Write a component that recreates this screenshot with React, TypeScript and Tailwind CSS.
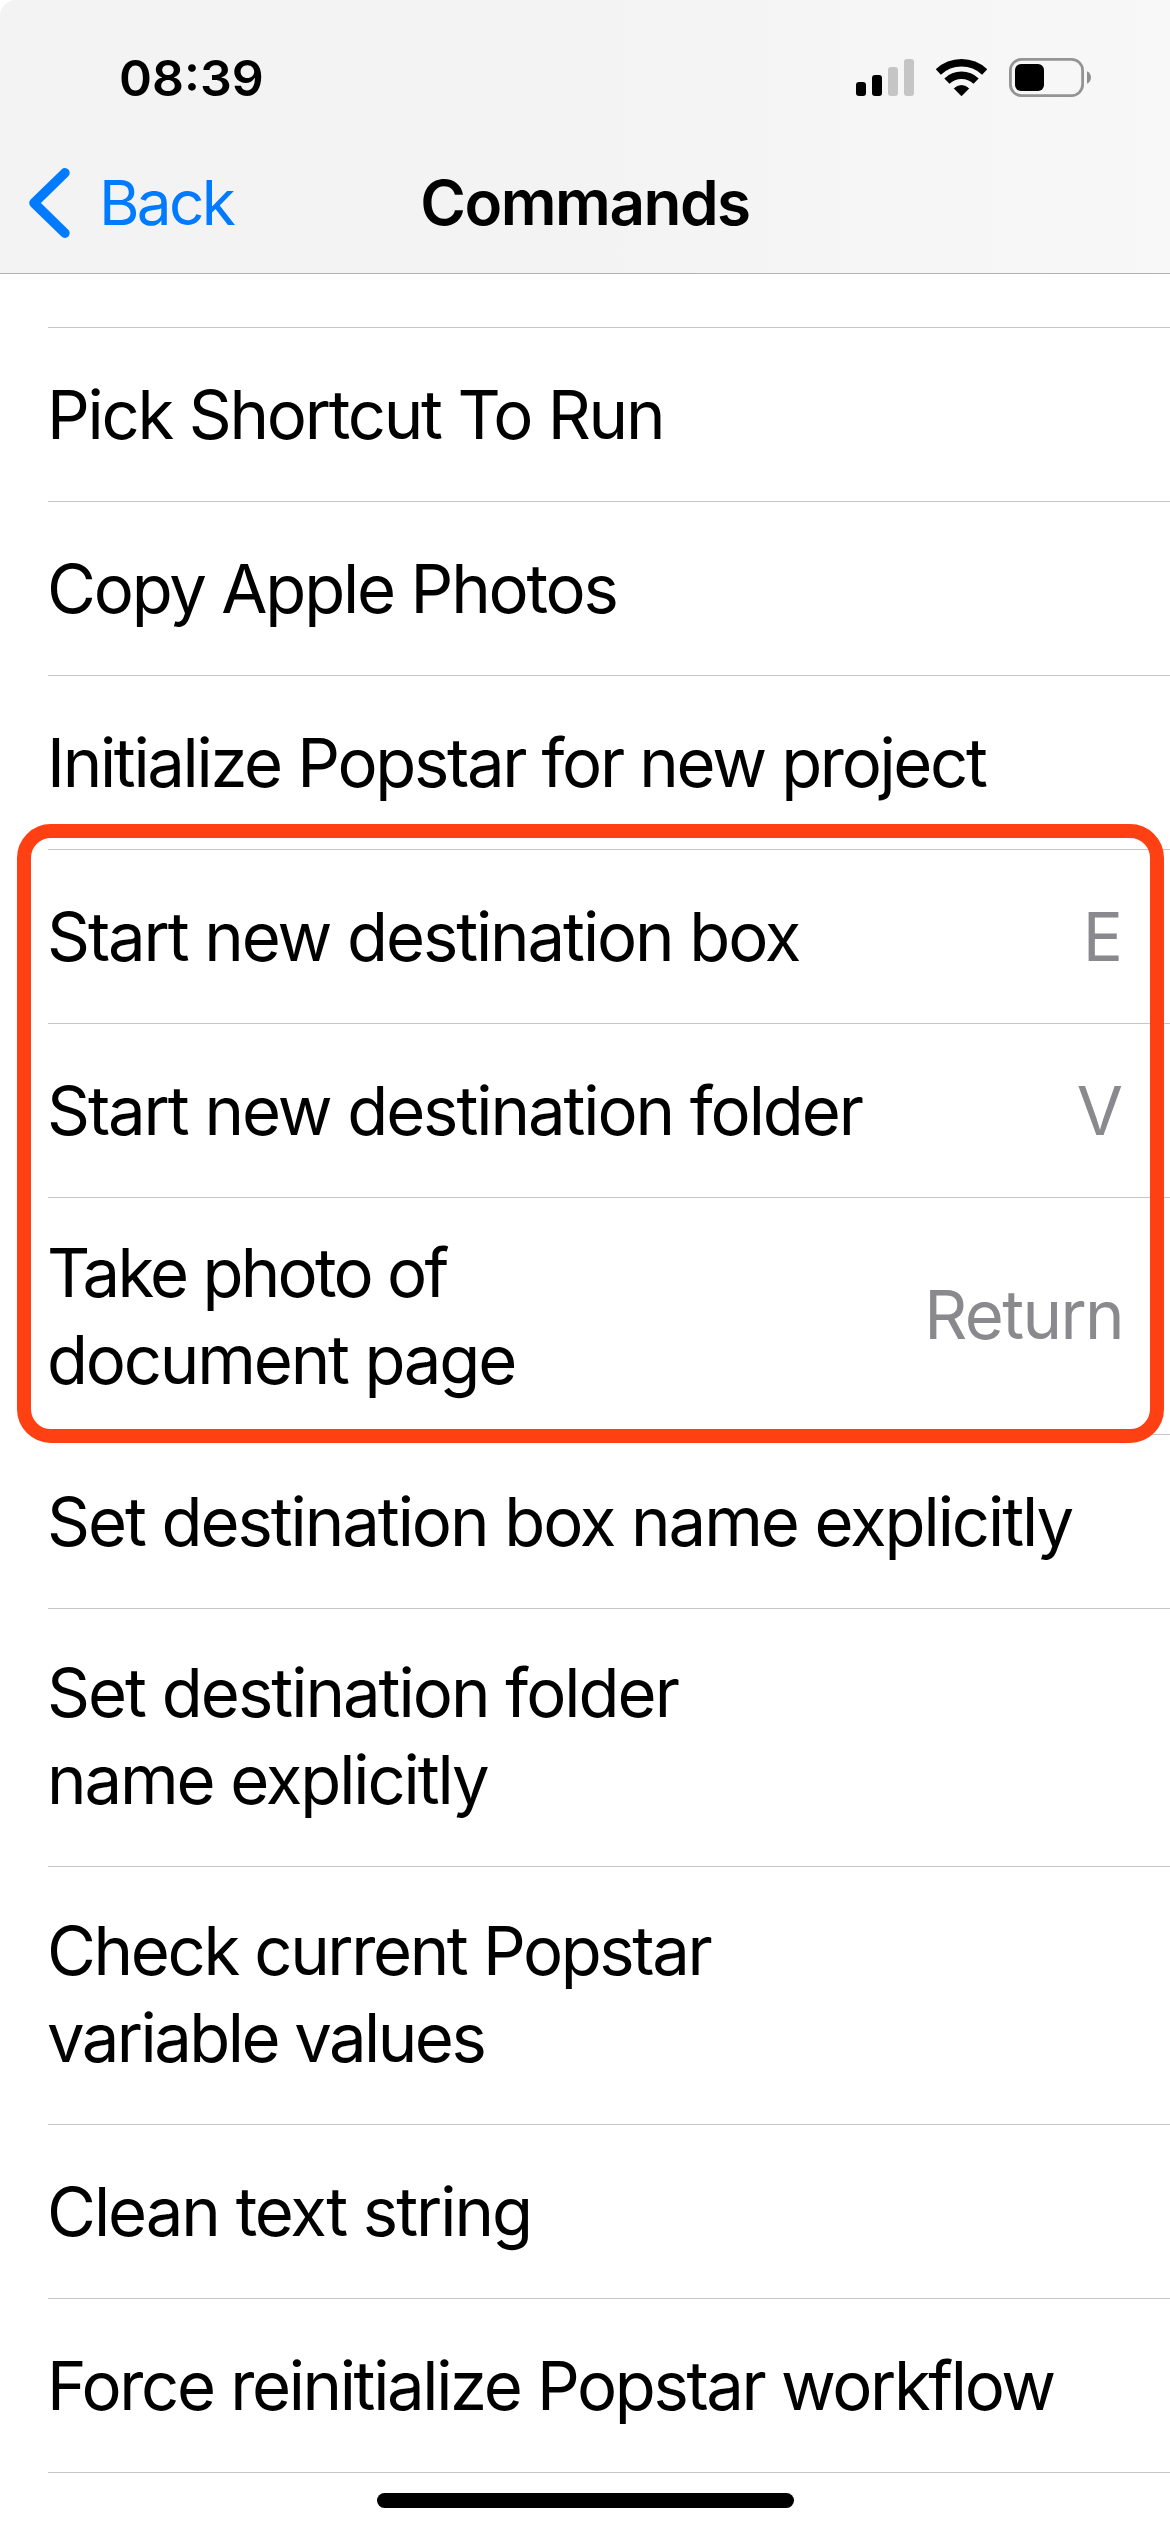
type Line = { text: string; tracking: string };
type Command = { lines: Line[]; shortcut?: Line; pad: string };

const SINGLE = "pt-[43px] pb-[43px]";
const DOUBLE = "pt-[40px] pb-[43px]";
const COMPACT = "pt-[31px] pb-[31px]";

const commands: Command[] = [
  { lines: [{ text: "Pick Shortcut To Run", tracking: "tracking-[-2.25px]" }], pad: SINGLE },
  { lines: [{ text: "Copy Apple Photos", tracking: "tracking-[-2.2px]" }], pad: SINGLE },
  { lines: [{ text: "Initialize Popstar for new project", tracking: "tracking-[-2.33px]" }], pad: SINGLE },
  {
    lines: [{ text: "Start new destination box", tracking: "tracking-[-2.1px]" }],
    shortcut: { text: "E", tracking: "tracking-normal" },
    pad: SINGLE,
  },
  {
    lines: [{ text: "Start new destination folder", tracking: "tracking-[-2.08px]" }],
    shortcut: { text: "V", tracking: "tracking-normal" },
    pad: SINGLE,
  },
  {
    lines: [
      { text: "Take photo of", tracking: "tracking-[-2.75px]" },
      { text: "document page", tracking: "tracking-[-2.2px]" },
    ],
    shortcut: { text: "Return", tracking: "tracking-[-1.64px]" },
    pad: COMPACT,
  },
  { lines: [{ text: "Set destination box name explicitly", tracking: "tracking-[-2.07px]" }], pad: SINGLE },
  {
    lines: [
      { text: "Set destination folder", tracking: "tracking-[-2px]" },
      { text: "name explicitly", tracking: "tracking-[-2.1px]" },
    ],
    pad: DOUBLE,
  },
  {
    lines: [
      { text: "Check current Popstar", tracking: "tracking-[-2.38px]" },
      { text: "variable values", tracking: "tracking-[-2.55px]" },
    ],
    pad: DOUBLE,
  },
  { lines: [{ text: "Clean text string", tracking: "tracking-[-2.05px]" }], pad: SINGLE },
  { lines: [{ text: "Force reinitialize Popstar workflow", tracking: "tracking-[-2.36px]" }], pad: SINGLE },
];

function SignalIcon() {
  return (
    <svg width="58" height="37" viewBox="0 0 58 37">
      <rect x="0" y="23" width="10" height="14" rx="3" fill="#000" />
      <rect x="16" y="16" width="10" height="21" rx="3" fill="#000" />
      <rect x="32" y="8" width="10" height="29" rx="3" fill="#c5c5c5" />
      <rect x="48" y="0" width="10" height="37" rx="3" fill="#c5c5c5" />
    </svg>
  );
}

function WifiIcon() {
  return (
    <svg width="51" height="38" viewBox="0 0 51 38" fill="none" stroke="#000">
      <path d="M2.3 13A33.75 33.75 0 0 1 48.7 13" strokeWidth="7.5" />
      <path d="M10.9 22.1A21.25 21.25 0 0 1 40.1 22.1" strokeWidth="7.5" />
      <path d="M25.5 36.8L18.3 29.5A10.4 10.4 0 0 1 32.7 29.5Z" fill="#000" strokeWidth="1" strokeLinejoin="round" />
    </svg>
  );
}

function BatteryIcon() {
  return (
    <svg width="83" height="39" viewBox="0 0 83 39">
      <rect x="1.4" y="1.4" width="72.2" height="36.2" rx="11" fill="none" stroke="#949494" strokeWidth="2.8" />
      <rect x="6" y="6" width="29" height="27" rx="6" fill="#000" />
      <path d="M78 13.2C80.4 14.3 82 16.8 82 19.5S80.4 24.7 78 25.8Z" fill="#8f8f8f" />
    </svg>
  );
}

function Header() {
  return (
    <header className="h-[274px] rounded-tl-[16px] border-b border-[#b2b2b2] bg-linear-to-r from-[#f3f3f3] via-[#f3f3f3] to-[#f8f8f8]">
      <div className="flex h-[132px] items-start justify-between pl-[119px] pr-[78px] pt-12">
        <span className="text-[50px] font-semibold leading-[60px]">08:39</span>
        <div className="flex items-start pt-[10px]">
          <div className="mr-[22px] pt-px">
            <SignalIcon />
          </div>
          <div className="mr-[22px] pt-px">
            <WifiIcon />
          </div>
          <BatteryIcon />
        </div>
      </div>
      <nav className="grid grid-cols-[1fr_auto_1fr] items-start pt-[33px] text-[62px] leading-[76px]">
        <a className="flex items-start pl-[29px] text-[#007aff]">
          <svg className="mr-[29px] mt-[3px]" width="41" height="70" viewBox="0 0 41 70" fill="none">
            <path d="M35.9 4.9L5 35L35.9 65.1" stroke="#007aff" strokeWidth="9.6" strokeLinecap="round" strokeLinejoin="round" />
          </svg>
          <span className="tracking-[-2.7px]">Back</span>
        </a>
        <h1 className="font-semibold tracking-[-1.5px]">Commands</h1>
      </nav>
    </header>
  );
}

function CommandRow({ lines, shortcut, pad }: Command) {
  return (
    <li className={`ml-12 flex items-center justify-between border-b border-[#c6c6c8] pr-[47px] ${pad}`}>
      <div className="-ml-px">
        {lines.map((l) => (
          <p key={l.text} className={`whitespace-nowrap ${l.tracking}`}>
            {l.text}
          </p>
        ))}
      </div>
      {shortcut && (
        <span className={`text-[#8a8a8e] ${shortcut.tracking} ${lines.length > 1 ? "pb-[3px]" : ""}`}>
          {shortcut.text}
        </span>
      )}
    </li>
  );
}

export default function App() {
  return (
    <div className="relative h-[2532px] w-[1170px] overflow-hidden bg-white font-['Inter',sans-serif] text-black">
      <Header />
      <ul className="text-[67px] leading-[87px]">
        <li className="ml-12 h-[54px] border-b border-[#c6c6c8]" />
        {commands.map((c) => (
          <CommandRow key={c.lines[0].text} {...c} />
        ))}
      </ul>
      <div className="mx-auto mt-5 h-[15px] w-[417px] rounded-full bg-black" />
      <div className="pointer-events-none absolute left-[17px] top-[824px] h-[619px] w-[1147px] rounded-[34px] border-[14px] border-[#ff4013]" />
    </div>
  );
}
